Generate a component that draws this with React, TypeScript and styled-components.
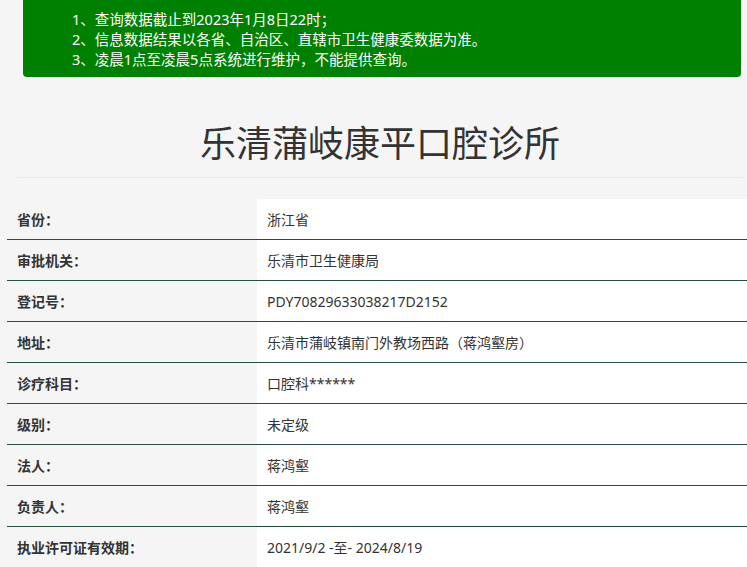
import React from "react";
import styled, { createGlobalStyle } from "styled-components";

const GlobalStyle = createGlobalStyle`
  html, body {
    margin: 0;
    padding: 0;
    background: #f5f5f5;
    font-family: "Noto Sans", "Noto Sans CJK SC", sans-serif;
    color: #333;
  }
  * { box-sizing: border-box; }
`;

const Page = styled.div`
  width: 747px;
  overflow: hidden;
`;

const Notice = styled.div`
  margin: 0 6px 0 23px;
  height: 77px;
  padding: 9px 0 8px 49px;
  background: #008000;
  border-radius: 0 0 4px 4px;
  color: #fff;
  font-size: 14.5px;
  line-height: 20px;
`;

const NoticeLine = styled.div`
  white-space: nowrap;
`;

const TitleBox = styled.div`
  margin: 46px 4px 0 17px;
  padding-bottom: 18px;
  border-bottom: 1px solid #e9e9e9;
  text-align: center;
`;

const Title = styled.h1`
  margin: 0;
  font-size: 36px;
  line-height: 36px;
  font-weight: 400;
  color: #333;
  font-family: "Noto Sans CJK SC", sans-serif;
`;

const Table = styled.div`
  margin: 21px 0 0 7px;
  display: flex;
  flex-direction: column;
`;

const Row = styled.div`
  display: grid;
  grid-template-columns: 250px 1fr;
  height: 41px;
  border-bottom: 1px solid #24503d;
`;

const Label = styled.div`
  display: flex;
  align-items: center;
  padding-left: 10px;
  background: #f5f5f5;
  font-size: 14px;
  font-weight: 700;
  color: #333;
`;

const Value = styled.div`
  display: flex;
  align-items: center;
  padding-left: 10px;
  background: #fff;
  font-size: 14px;
  color: #333;
`;

const notices = [
  "1、查询数据截止到2023年1月8日22时；",
  "2、信息数据结果以各省、自治区、直辖市卫生健康委数据为准。",
  "3、凌晨1点至凌晨5点系统进行维护，不能提供查询。",
];

const rows: [string, string][] = [
  ["省份：", "浙江省"],
  ["审批机关：", "乐清市卫生健康局"],
  ["登记号：", "PDY70829633038217D2152"],
  ["地址：", "乐清市蒲岐镇南门外教场西路（蒋鸿壑房）"],
  ["诊疗科目：", "口腔科******"],
  ["级别：", "未定级"],
  ["法人：", "蒋鸿壑"],
  ["负责人：", "蒋鸿壑"],
  ["执业许可证有效期：", "2021/9/2 -至- 2024/8/19"],
];

export default function App() {
  return (
    <Page>
      <GlobalStyle />
      <Notice>
        {notices.map((n) => (
          <NoticeLine key={n}>{n}</NoticeLine>
        ))}
      </Notice>
      <TitleBox>
        <Title>乐清蒲岐康平口腔诊所</Title>
      </TitleBox>
      <Table>
        {rows.map(([l, v]) => (
          <Row key={l}>
            <Label>{l}</Label>
            <Value>{v}</Value>
          </Row>
        ))}
      </Table>
    </Page>
  );
}
